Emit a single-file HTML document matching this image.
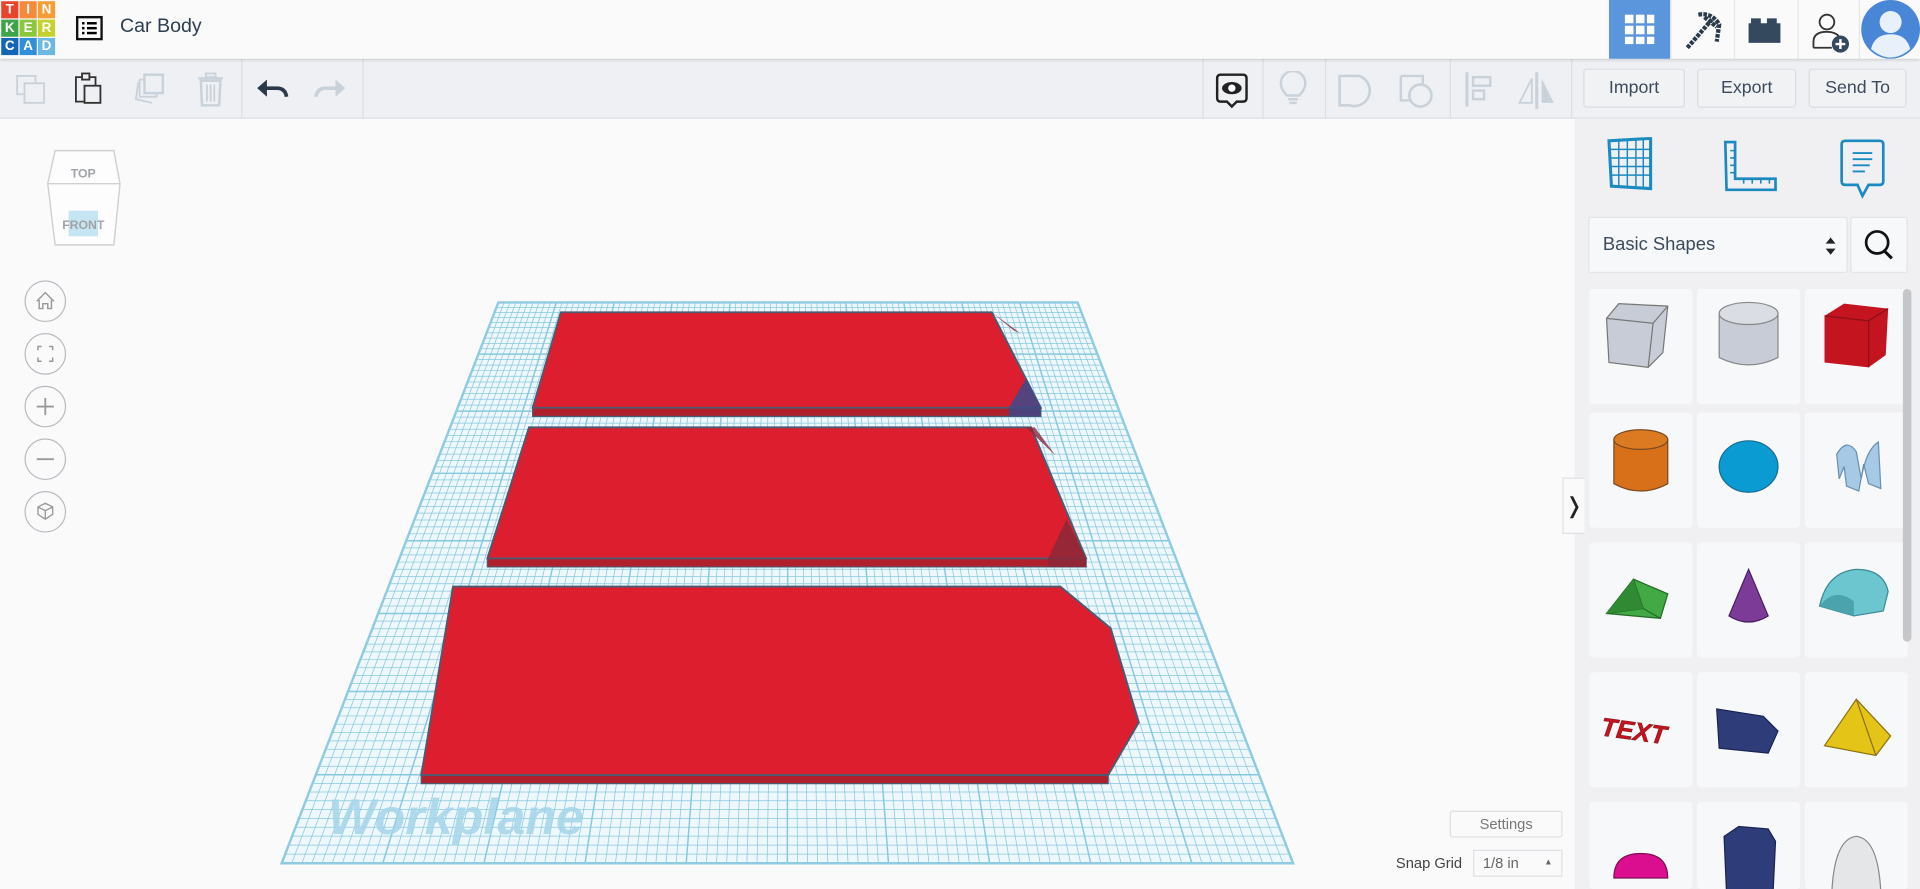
<!DOCTYPE html>
<html><head><meta charset="utf-8">
<style>
*{box-sizing:border-box;margin:0;padding:0}
html,body{width:1920px;height:889px;overflow:hidden;background:#fafafa;font-family:"Liberation Sans",sans-serif}
#root{position:absolute;left:0;top:0;width:1568px;height:726px;transform:scale(1.22449);transform-origin:0 0;background:#fafafa}
.abs{position:absolute}
.top{left:0;top:0;width:1568px;height:48px;background:#fafafa;box-shadow:0 1px 3px rgba(0,0,0,.2);z-index:3}
.tile{position:absolute;width:14px;height:14px;color:#fff;font-weight:bold;font-size:11px;text-align:center;line-height:14px}
.tb{left:0;top:48px;width:1568px;height:49px;background:#eff0f3;border-bottom:1px solid #dcdfe4;z-index:2}
.div{position:absolute;top:0;width:1px;height:49px;background:#dcdfe4}
.btn{position:absolute;top:8px;height:32px;border:1px solid #d9dce1;border-radius:3px;background:#f1f2f4;color:#3c4b5c;font-size:14.5px;text-align:center;line-height:30px}
.panel{left:1286px;top:97px;width:282px;height:629px;background:#f0f0f2}
.cell{position:absolute;width:84px;height:94px;background:#f7f8f9;border-radius:3px}
.nav{position:absolute;left:20px;width:34px;height:34px;border:1px solid #b8bcc2;border-radius:50%;background:#fafafa}
</style></head><body>
<div id="root">
<div class="abs top">
  <div class="tile" style="left:1px;top:1px;background:#e8432d">T</div>
  <div class="tile" style="left:16px;top:1px;background:#f7893a">I</div>
  <div class="tile" style="left:31px;top:1px;background:#f59c34">N</div>
  <div class="tile" style="left:1px;top:16px;background:#3fa447">K</div>
  <div class="tile" style="left:16px;top:16px;background:#8cc63f">E</div>
  <div class="tile" style="left:31px;top:16px;background:#c5d22e">R</div>
  <div class="tile" style="left:1px;top:31px;background:#1565b6">C</div>
  <div class="tile" style="left:16px;top:31px;background:#2f8fd8">A</div>
  <div class="tile" style="left:31px;top:31px;background:#6bb8e4">D</div>
  <svg class="abs" style="left:62px;top:13px" width="22" height="20" viewBox="0 0 22 20"><rect x="1" y="1" width="20" height="18" fill="none" stroke="#111" stroke-width="2"/><rect x="5" y="5" width="2" height="2"/><rect x="9" y="5" width="8" height="2"/><rect x="5" y="9" width="2" height="2"/><rect x="9" y="9" width="8" height="2"/><rect x="5" y="13" width="2" height="2"/><rect x="9" y="13" width="8" height="2"/></svg>
  <div class="abs" style="left:98px;top:13px;font-size:16px;color:#2c3e50">Car Body</div>
  <div class="abs" style="left:1314px;top:0;width:50px;height:48px;background:#5b95dc"></div>
  <svg class="abs" style="left:1326px;top:11px" width="26" height="26"><g fill="#fff"><rect x="1" y="1" width="7" height="7"/><rect x="10" y="1" width="7" height="7"/><rect x="19" y="1" width="6" height="7"/><rect x="1" y="10" width="7" height="7"/><rect x="10" y="10" width="7" height="7"/><rect x="19" y="10" width="6" height="7"/><rect x="1" y="19" width="7" height="6"/><rect x="10" y="19" width="7" height="6"/><rect x="19" y="19" width="6" height="6"/></g></svg>
  <div class="abs" style="left:1364px;top:0;width:1px;height:48px;background:#e4e6ea"></div>
  <svg class="abs" style="left:1374px;top:8px" width="34" height="34"><path d="M4 31 L24 8 M13 4 Q24 2 30 12 L28 26 M18 6 L28 14" stroke="#2a3a4a" stroke-width="3.5" fill="none" stroke-dasharray="3 1"/></svg>
  <div class="abs" style="left:1416px;top:0;width:1px;height:48px;background:#e4e6ea"></div>
  <svg class="abs" style="left:1426px;top:12px" width="30" height="26"><rect x="2" y="7" width="26" height="16" fill="#34495e"/><rect x="4" y="3" width="8" height="6" fill="#34495e"/><rect x="17" y="3" width="8" height="6" fill="#34495e"/></svg>
  <div class="abs" style="left:1468px;top:0;width:1px;height:48px;background:#e4e6ea"></div>
  <svg class="abs" style="left:1478px;top:8px" width="36" height="36"><circle cx="14" cy="10" r="6" fill="none" stroke="#333" stroke-width="1.5"/><path d="M3 31 V26 Q3 18 14 18 Q21 18 24 22 M3 31 H18" fill="none" stroke="#333" stroke-width="1.5"/><circle cx="25" cy="28" r="7" fill="#34495e"/><path d="M25 24 V32 M21 28 H29" stroke="#fff" stroke-width="2"/></svg>
  <div class="abs" style="left:1518px;top:0;width:1px;height:48px;background:#e4e6ea"></div>
  <svg class="abs" style="left:1519px;top:0" width="49" height="48"><ellipse cx="25" cy="24" rx="24" ry="24" fill="#4a86d8"/><circle cx="25" cy="18" r="9" fill="#e8f0fb"/><path d="M9 40 Q12 28 25 28 Q38 28 41 40 Q33 47 25 47 Q17 47 9 40Z" fill="#e8f0fb"/></svg>
</div>

<div class="abs tb">
  <svg class="abs" style="left:12px;top:12px" width="26" height="26"><rect x="2" y="2" width="15" height="15" fill="none" stroke="#c9d2db" stroke-width="1.5"/><rect x="8" y="8" width="16" height="16" fill="#eff0f3" stroke="#c9d2db" stroke-width="1.5"/></svg>
  <svg class="abs" style="left:60px;top:11px" width="26" height="28"><path d="M2 4 H18 V24 H2Z" fill="none" stroke="#333" stroke-width="1.5"/><rect x="7" y="1" width="6" height="5" fill="#eff0f3" stroke="#333" stroke-width="1.5"/><rect x="9" y="11" width="13" height="14" fill="#eff0f3" stroke="#333" stroke-width="1.5"/></svg>
  <svg class="abs" style="left:108px;top:11px" width="28" height="28"><path d="M5 8 L3 22 L16 25" fill="none" stroke="#c9d2db" stroke-width="1.5"/><rect x="6" y="6" width="14" height="14" fill="none" stroke="#c9d2db" stroke-width="1.5"/><rect x="10" y="2" width="15" height="15" fill="#eff0f3" stroke="#c9d2db" stroke-width="2"/></svg>
  <svg class="abs" style="left:160px;top:10px" width="26" height="30"><rect x="2" y="5" width="20" height="2" fill="#c9d2db"/><rect x="8" y="2" width="8" height="3" fill="none" stroke="#c9d2db" stroke-width="1.5"/><path d="M4 8 H20 L19 28 H5Z" fill="none" stroke="#c9d2db" stroke-width="2"/><path d="M9 11 V25 M12 11 V25 M15 11 V25" stroke="#c9d2db" stroke-width="1.5"/></svg>
  <div class="div" style="left:197px"></div>
  <svg class="abs" style="left:208px;top:14px" width="28" height="20"><path d="M2 10 L10 3 V17Z" fill="#2a3a4a"/><path d="M9 10 H18 Q25 10 26 17" fill="none" stroke="#2a3a4a" stroke-width="3"/></svg>
  <svg class="abs" style="left:256px;top:14px" width="28" height="20"><path d="M26 10 L18 3 V17Z" fill="#c9d2db"/><path d="M19 10 H10 Q3 10 2 17" fill="none" stroke="#c9d2db" stroke-width="3"/></svg>
  <div class="div" style="left:296px"></div>
  <div class="div" style="left:982px"></div>
  <svg class="abs" style="left:992px;top:11px" width="28" height="30"><path d="M5 2 H23 Q26 2 26 5 V21 Q26 24 23 24 H18 L14 28 L10 24 H5 Q2 24 2 21 V5 Q2 2 5 2Z" fill="none" stroke="#222" stroke-width="2"/><ellipse cx="14" cy="13" rx="8" ry="5" fill="#222"/><circle cx="14" cy="13" r="3" fill="#fff"/></svg>
  <div class="div" style="left:1031px"></div>
  <svg class="abs" style="left:1044px;top:10px" width="24" height="30"><path d="M7 20 Q2 15 2 10 A10 10 0 0 1 22 10 Q22 15 17 20 Z" fill="none" stroke="#c9d2db" stroke-width="2"/><path d="M8 23 H16 M9 26 H15" stroke="#c9d2db" stroke-width="2"/></svg>
  <div class="div" style="left:1082px"></div>
  <svg class="abs" style="left:1092px;top:12px" width="30" height="30"><path d="M2 2 H18 A8 8 0 1 1 10 26 H2Z" fill="none" stroke="#c9d2db" stroke-width="2.2"/></svg>
  <svg class="abs" style="left:1142px;top:12px" width="30" height="30"><path d="M2 2 H20 V9 M2 2 V22 H9" fill="none" stroke="#c9d2db" stroke-width="2"/><circle cx="18" cy="18" r="9" fill="none" stroke="#c9d2db" stroke-width="2.2"/></svg>
  <div class="div" style="left:1184px"></div>
  <svg class="abs" style="left:1196px;top:10px" width="24" height="30"><path d="M2 1 V29" stroke="#c9d2db" stroke-width="2.5"/><rect x="7" y="5" width="14" height="7" fill="none" stroke="#c9d2db" stroke-width="2"/><rect x="7" y="16" width="9" height="7" fill="none" stroke="#c9d2db" stroke-width="2"/></svg>
  <svg class="abs" style="left:1238px;top:10px" width="34" height="32"><path d="M17 1 V31" stroke="#c9d2db" stroke-width="2.5"/><path d="M13 6 L3 26 H13Z" fill="none" stroke="#c9d2db" stroke-width="1.5"/><path d="M21 6 L31 26 H21Z" fill="#c9d2db"/></svg>
  <div class="div" style="left:1283px"></div>
  <div class="btn" style="left:1293px;width:83px">Import</div>
  <div class="btn" style="left:1386px;width:81px">Export</div>
  <div class="btn" style="left:1477px;width:80px">Send To</div>
</div>

<svg class="abs" style="left:0;top:97px" width="1286" height="629" viewBox="0 97 1286 629">
  <defs><clipPath id="wp"><polygon points="407,247 880,247 1056,705 230,705"/></clipPath></defs>
  <polygon points="407,247 880,247 1056,705 230,705" fill="#eef7fb"/>
  <g id="grid" clip-path="url(#wp)"></g>
  <polygon points="407,247 880,247 1056,705 230,705" fill="none" stroke="#8fcbe2" stroke-width="2"/>
  <text x="268" y="681" font-family="Liberation Sans" font-weight="bold" font-style="italic" font-size="41" fill="#a6d6ea" opacity=".85">Workplane</text>
  <polygon points="435,333 850,333 850,340 435,340" fill="#b01f2c" stroke="#4b5b72" stroke-width="1"/>
  <polygon points="458,255 810,255 850,333 435,333" fill="#dc1e2e" stroke="#4b5b72" stroke-width="1.5"/>
  <polygon points="810,255 828,270 833,272" fill="#8b2838" opacity=".8"/>
  <polygon points="838,309 850,333 850,340 824,340 824,333" fill="#3c4a8a" opacity=".85"/>
  <polygon points="398,456 887,456 887,463 398,463" fill="#b01f2c" stroke="#4b5b72" stroke-width="1"/>
  <polygon points="432,349 842,349 887,456 398,456" fill="#dc1e2e" stroke="#4b5b72" stroke-width="1.5"/>
  <polygon points="838,349 845,349 862,372" fill="#8b2838" opacity=".8"/>
  <polygon points="871,424 887,456 887,463 856,463 856,456" fill="#8b2838" opacity=".85"/>
  <polygon points="344,633 905,633 905,640 344,640" fill="#b01f2c" stroke="#4b5b72" stroke-width="1"/>
  <polygon points="370,479 866,479 907,513 930,590 905,633 344,633" fill="#dc1e2e" stroke="#4b5b72" stroke-width="1.5"/>
</svg>

<svg class="abs" style="left:28px;top:120px" width="74" height="86"><path d="M17 3 H65 L70 30 L65 80 H17 L11 30Z" fill="#fdfdfd" stroke="#cfd1d4" stroke-width="1.2"/><path d="M11 30 H70" stroke="#cfd1d4" stroke-width="1.2"/><rect x="28" y="52" width="24" height="21" fill="#c6e5f2"/><text x="40" y="25" text-anchor="middle" font-size="10" font-weight="bold" fill="#a0a4a9" font-family="Liberation Sans">TOP</text><text x="40" y="67" text-anchor="middle" font-size="10" font-weight="bold" fill="#a0a4a9" font-family="Liberation Sans">FRONT</text></svg>
<div class="nav" style="top:229px"><svg width="32" height="32"><path d="M9 16 L16 9 L23 16 M11 15 V22 H14 V18 H18 V22 H21 V15" fill="none" stroke="#999" stroke-width="1.2"/></svg></div>
<div class="nav" style="top:272px"><svg width="32" height="32"><path d="M10 13 V10 H13 M19 10 H22 V13 M22 19 V22 H19 M13 22 H10 V19" fill="none" stroke="#999" stroke-width="1.2"/></svg></div>
<div class="nav" style="top:315px"><svg width="32" height="32"><path d="M16 9 V23 M9 16 H23" stroke="#999" stroke-width="1.5"/></svg></div>
<div class="nav" style="top:358px"><svg width="32" height="32"><path d="M9 16 H23" stroke="#999" stroke-width="1.5"/></svg></div>
<div class="nav" style="top:401px"><svg width="32" height="32"><path d="M10 12 L16 9 L22 12 L22 18 L16 22 L10 18Z M10 12 L16 15 L22 12 M16 15 V22" fill="none" stroke="#999" stroke-width="1.1"/></svg></div>

<div class="abs" style="left:1184px;top:662px;width:92px;height:22px;border:1px solid #dde0e4;background:#fafafa;border-radius:2px;color:#777;font-size:12px;text-align:center;line-height:20px">Settings</div>
<div class="abs" style="left:1140px;top:698px;font-size:12px;color:#444">Snap Grid</div>
<div class="abs" style="left:1203px;top:694px;width:73px;height:22px;border:1px solid #dde0e4;background:#fafafa;font-size:12px;color:#666;line-height:20px;padding-left:7px">1/8 in<span style="position:absolute;right:7px;font-size:7px">▲</span></div>

<div class="abs" style="left:1276px;top:390px;width:18px;height:46px;background:#fafafa;border:1px solid #dde0e4;border-right:none;font-size:18px;line-height:44px;text-align:center;color:#222;z-index:2">❭</div>

<div class="abs panel">
  <svg class="abs" style="left:24px;top:15px" width="48" height="48"><path d="M4 3 L38 1 L38 42 L6 40Z" fill="none" stroke="#1b8ac0" stroke-width="2.5"/><g stroke="#1b8ac0" stroke-width="1.2"><path d="M4 10 H38 M4 17 H38 M5 24 H38 M5 31 H38 M12 2 V41 M19 2 V41 M26 2 V41 M32 2 V41"/></g></svg>
  <svg class="abs" style="left:120px;top:17px" width="50" height="48"><path d="M3 2 H11 V32 H44 V41 H4Z" fill="none" stroke="#1b8ac0" stroke-width="2.2"/><g stroke="#1b8ac0" stroke-width="1.3"><path d="M11 9 H7 M11 15 H7 M11 21 H7 M11 27 H7 M18 32 V36 M25 32 V36 M32 32 V36 M39 32 V36"/></g></svg>
  <svg class="abs" style="left:216px;top:16px" width="40" height="50"><path d="M5 2 H33 Q36 2 36 5 V35 Q36 38 33 38 H24 L19 47 L15 38 H5 Q2 38 2 35 V5 Q2 2 5 2Z" fill="none" stroke="#1b8ac0" stroke-width="2.2"/><path d="M11 12 H27 M11 17 H27 M11 22 H25 M11 27 H21" stroke="#1b8ac0" stroke-width="1.6"/></svg>
  <div class="abs" style="left:11px;top:80px;width:212px;height:46px;background:#f7f8f9;border:1px solid #e2e4e7;border-radius:2px;font-size:15px;color:#3c4b5c;line-height:44px;padding-left:11px">Basic Shapes<svg class="abs" style="right:8px;top:15px" width="10" height="16"><path d="M1 6 L5 1 L9 6Z M1 10 L5 15 L9 10Z" fill="#222"/></svg></div>
  <div class="abs" style="left:225px;top:80px;width:47px;height:46px;background:#f7f8f9;border:1px solid #e2e4e7;border-radius:2px"><svg width="45" height="44"><circle cx="21" cy="20" r="9" fill="none" stroke="#111" stroke-width="2.2"/><path d="M27 27 L33 33" stroke="#111" stroke-width="2.5"/></svg></div>
  <div id="cells"></div>
  <div class="abs" style="left:268px;top:139px;width:7px;height:288px;background:#c4c6c9;border-radius:4px;z-index:2"></div>
</div>
</div>
<script>
(function(){
 var g=document.getElementById('grid'),s='';
 var tl=407,tr=880,bl=230,br=1056,ty=247,by=705;
 var N=100;
 for(var i=0;i<=N;i++){var t=i/N;var x1=tl+(tr-tl)*t,x2=bl+(br-bl)*t;var w=(i%10==0)?1.2:0.6;s+='<line x1="'+x1+'" y1="'+ty+'" x2="'+x2+'" y2="'+by+'" stroke="#86c8e0" stroke-width="'+w+'"/>';}
 var M=80;
 for(var j=0;j<=M;j++){var t=j/M;var u=t*(0.7+0.3*t);var y=ty+(by-ty)*u;var w=(j%10==0)?1.2:0.6;s+='<line x1="200" y1="'+y+'" x2="1100" y2="'+y+'" stroke="#86c8e0" stroke-width="'+w+'"/>';}
 g.innerHTML=s;
 var c=document.getElementById('cells'),h='';
 var xs=[12,100,188],ys=[139,240,346,452,558];
 var shapes=[
 '<path d="M14 24 L24 12 L64 14 L60 52 L48 64 L16 60Z" fill="#c7ccd6" stroke="#777"/><path d="M14 24 L52 28 L64 14 M52 28 L48 64" fill="none" stroke="#777"/>',
 '<path d="M18 20 V56 Q42 68 66 56 V20" fill="#c7ccd6" stroke="#888"/><ellipse cx="42" cy="20" rx="24" ry="9" fill="#dadde4" stroke="#888"/>',
 '<path d="M16 22 L32 12 L68 16 L66 54 L52 64 L16 60Z" fill="#c4141f"/><path d="M16 22 L52 26 L68 16 M52 26 L52 64" fill="none" stroke="#8a1018"/>',
 '<path d="M20 22 V58 Q42 70 64 58 V22" fill="#d8701a" stroke="#7a4a20"/><ellipse cx="42" cy="22" rx="22" ry="8" fill="#dc7a22" stroke="#7a4a20"/>',
 '<ellipse cx="42" cy="44" rx="24" ry="21" fill="#0a9bd2" stroke="#1a6a90"/>',
 '<path d="M26 34 Q34 20 42 32 L46 54 Q50 30 60 24 L62 62 L52 58 L48 42 L44 64 L34 60 L32 44 L28 54Z" fill="#a6c9e6" stroke="#6a8fb0"/>',
 '<path d="M14 58 L36 30 L64 42 L58 62 Z" fill="#43a944" stroke="#236b26"/><path d="M14 58 L44 54 L58 62 M36 30 L44 54" stroke="#236b26" fill="none"/><path d="M14 58 L36 30 L44 54Z" fill="#2f8a33"/>',
 '<path d="M42 22 L26 60 Q42 70 58 60Z" fill="#7d3b98" stroke="#4b2060"/>',
 '<path d="M12 52 Q18 24 42 22 Q64 22 68 40 L64 56 L40 60Z" fill="#6bc6d0" stroke="#3b8a94"/><path d="M12 52 Q24 36 40 48 L40 60Z" fill="#4aa3ad"/>',
 '<text x="10" y="56" font-size="21" font-weight="bold" font-style="italic" fill="#c4141f" stroke="#8a1018" stroke-width=".5" font-family="Liberation Sans" transform="rotate(8 42 44)">TEXT</text>',
 '<path d="M16 30 L54 36 L66 48 L58 66 L18 62Z" fill="#2e3d7a" stroke="#1a2450"/>',
 '<path d="M42 22 L16 60 L58 68 L70 52Z" fill="#e4c417" stroke="#8a7210"/><path d="M42 22 L58 68" stroke="#8a7210"/>',
 '<path d="M20 62 Q20 42 42 42 Q64 42 64 62Z" fill="#da0e8e" stroke="#801055"/>',
 '<path d="M22 28 L34 20 L58 22 L64 32 L62 74 L24 74Z" fill="#2e3d7a" stroke="#1a2450"/>',
 '<path d="M22 74 Q24 30 42 28 Q60 30 62 74Z" fill="#e4e6e8" stroke="#888"/>'];
 for(var r=0;r<5;r++)for(var k=0;k<3;k++){var hh=(r==4)?71:94;h+='<div class="cell" style="left:'+xs[k]+'px;top:'+ys[r]+'px;height:'+hh+'px;overflow:hidden"><svg width="84" height="94">'+shapes[r*3+k]+'</svg></div>';}
 c.innerHTML=h;
})();
</script>
</body></html>
